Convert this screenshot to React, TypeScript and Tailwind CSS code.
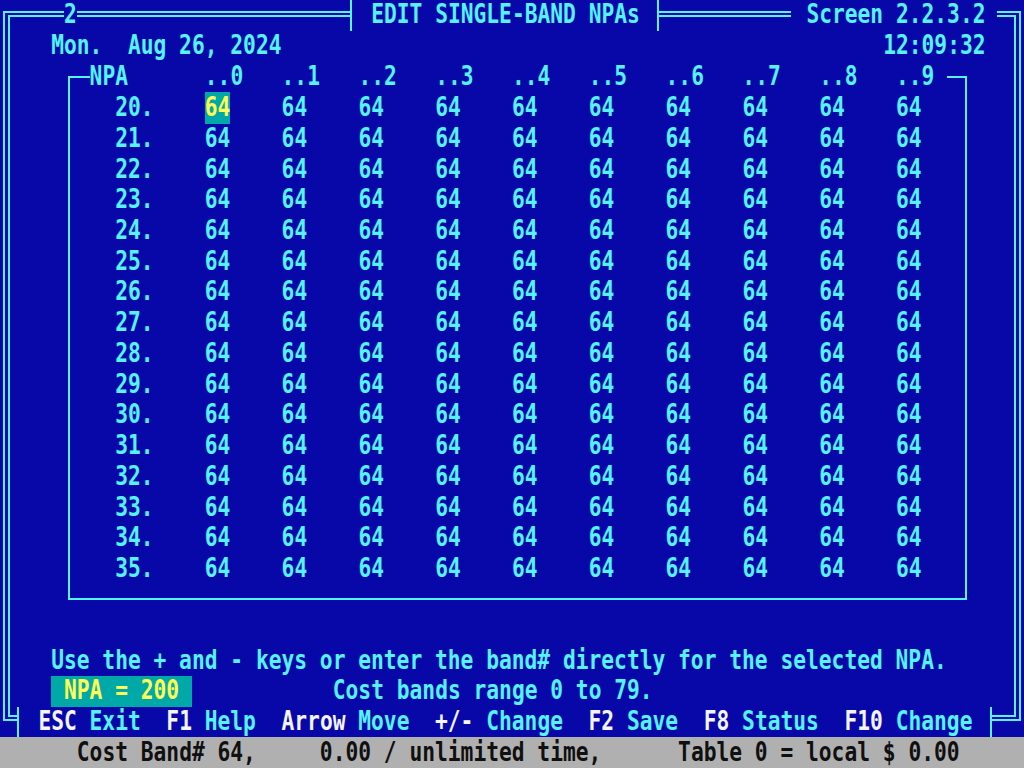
import React from "react";

const T = ({
  children,
  className = "",
}: {
  children: React.ReactNode;
  className?: string;
}) => (
  <span
    className={`inline-block origin-center -translate-y-[1px] scale-y-[1.25] ${className}`}
  >
    {children}
  </span>
);

const npas = Array.from({ length: 16 }, (_, i) => 20 + i);
const cols = [0, 1, 2, 3, 4, 5, 6, 7, 8, 9];

const keys = [
  ["ESC", "Exit"],
  ["F1", "Help"],
  ["Arrow", "Move"],
  ["+/-", "Change"],
  ["F2", "Save"],
  ["F8", "Status"],
  ["F10", "Change"],
];

const App = () => {
  return (
    <div className="flex h-[768px] w-[1024px] flex-col overflow-hidden whitespace-pre bg-[#0808a8] font-['DejaVu_Sans_Mono',monospace] text-[21.26px] font-bold text-[#55f2ff]">
      <div className="h-[737.28px] shrink-0 pt-[11px] pl-[3px]">
        {/* outer double frame */}
        <div className="h-[710px] w-[1018px] border-2 border-[#55f2ff]">
          <div className="mx-[3px] my-[2px] h-[702px] border-2 border-[#55f2ff]">
            {/* title line */}
            <div className="-mx-[10px] -mt-[17px] flex h-[30.72px]">
              <div className="ml-[64px] flex w-[12.8px] items-center bg-[#0808a8]">
                <T>2</T>
              </div>
              <div className="ml-[273.2px] flex w-[309px] items-center border-x-2 border-[#55f2ff] bg-[#0808a8] pl-[19.2px]">
                <T>EDIT SINGLE-BAND NPAs</T>
              </div>
              <div className="ml-[132px] flex w-[206px] items-center bg-[#0808a8] pl-[15.4px]">
                <T>Screen 2.2.3.2</T>
              </div>
            </div>

            {/* date / time */}
            <div className="-mx-[10px] flex h-[30.72px] items-center pl-[51.2px]">
              <T className="w-[832px]">Mon.  Aug 26, 2024</T>
              <T>12:09:32</T>
            </div>

            {/* NPA table */}
            <div className="-mx-[10px] h-[552.96px] pt-[14.36px]">
              <div className="ml-[68px] w-[899px] border-2 border-[#55f2ff] pb-[14.32px]">
                <div className="-mt-[16.36px] ml-[19.6px] grid h-[30.72px] w-[857.6px] grid-cols-[115.2px_repeat(9,76.8px)_51.2px] items-center bg-[#0808a8]">
                  <T>NPA</T>
                  {cols.map((c) => (
                    <T key={c}>..{c}</T>
                  ))}
                </div>
                {npas.map((n) => (
                  <div
                    key={n}
                    className="grid h-[30.72px] grid-cols-[134.8px_repeat(9,76.8px)_1fr] items-center"
                  >
                    <T className="pl-[45.2px]">{n}.</T>
                    {cols.map((c) =>
                      n === 20 && c === 0 ? (
                        <div key={c} className="flex h-full">
                          <span className="flex h-full w-[25.6px] items-center bg-[#00a8a8] text-[#ffff55]">
                            <T>64</T>
                          </span>
                        </div>
                      ) : (
                        <T key={c}>64</T>
                      )
                    )}
                  </div>
                ))}
              </div>
            </div>

            <div className="h-[30.72px]" />

            <div className="-mx-[10px] flex h-[30.72px] items-center pl-[51.2px]">
              <T>Use the + and - keys or enter the band# directly for the selected NPA.</T>
            </div>

            <div className="-mx-[10px] flex h-[30.72px] pl-[51.2px]">
              <div className="flex w-[140.8px] items-center bg-[#00a8a8] pl-[12.8px] text-[#ffff55]">
                <T>NPA = 200</T>
              </div>
              <div className="ml-[140.8px] flex items-center">
                <T>Cost bands range 0 to 79.</T>
              </div>
            </div>

            {/* function keys over the bottom frame line */}
            <div className="-mx-[10px] flex h-[30.72px]">
              <div className="ml-[17px] flex w-[975px] items-center border-x-2 border-[#55f2ff] bg-[#0808a8] pl-[19.4px]">
                {keys.map(([k, label], i) => (
                  <React.Fragment key={k + label}>
                    <T className="text-[#f4f4ff]">{k}</T>
                    <T>{" " + label + (i < keys.length - 1 ? "  " : "")}</T>
                  </React.Fragment>
                ))}
              </div>
            </div>
          </div>
        </div>
      </div>

      {/* status bar */}
      <div className="flex h-[30.72px] shrink-0 items-center bg-[#b0b0b0] pl-[76.8px] text-[#101010]">
        <T>Cost Band# 64,     0.00 / unlimited time,      Table 0 = local $ 0.00</T>
      </div>
    </div>
  );
};

export default App;
